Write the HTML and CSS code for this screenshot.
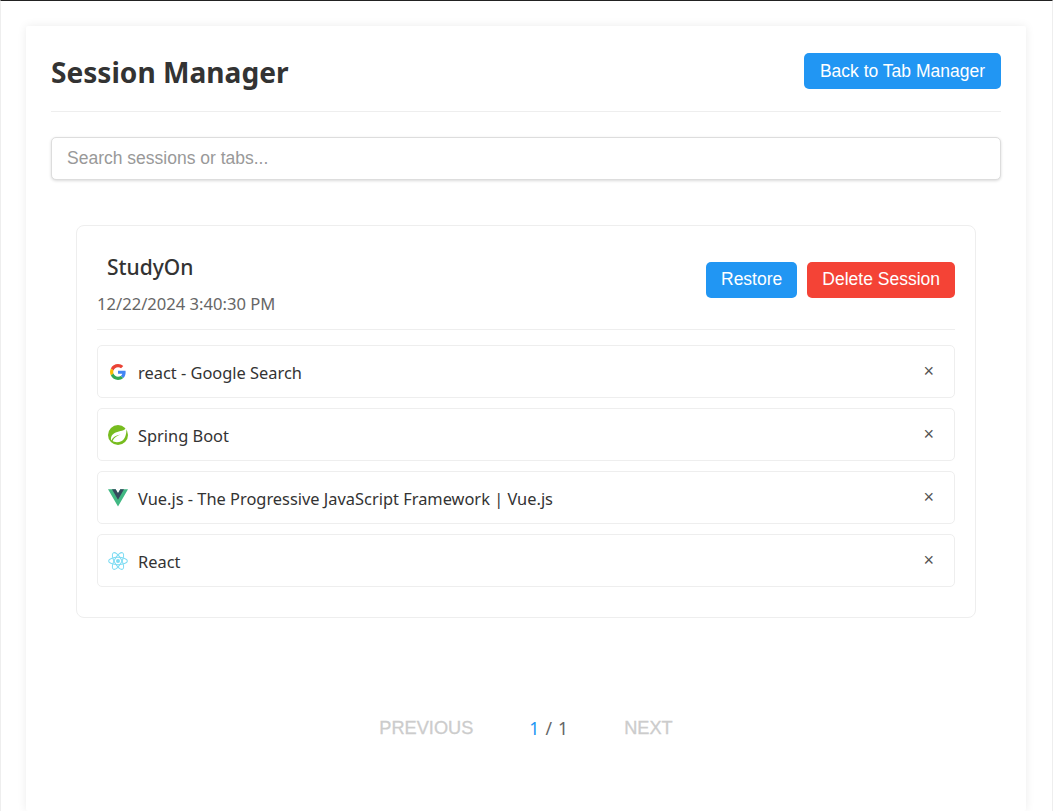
FILE: index.html
```html
<!DOCTYPE html>
<html lang="en">
<head>
  <meta charset="UTF-8" />
  <meta name="viewport" content="width=device-width, initial-scale=1.0"/>
  <title>Session Manager</title>
  <link rel="stylesheet" href="styles.css">
</head>
<body>
  <div class="container">
    <div class="header">
      <h1>Session Manager</h1>
      <button class="btn btn-blue">Back to Tab Manager</button>
    </div>

    <input class="search" type="text" placeholder="Search sessions or tabs...">

    <div class="session">
      <div class="session-head">
        <div>
          <h3>StudyOn</h3>
          <div class="date">12/22/2024 3:40:30 PM</div>
        </div>
        <div class="actions">
          <button class="btn btn-blue">Restore</button>
          <button class="btn btn-red">Delete Session</button>
        </div>
      </div>

      <ul class="tabs">
        <li class="tab">
          <svg class="favicon favicon-small" viewBox="0 0 48 48">
            <path fill="#ea4335" d="M24 9.500c3.500 0 6.700 1.300 9.100 3.500l6.800-6.800C35.800 2.400 30.300 0 24 0 14.600 0 6.500 5.400 2.600 13.200l7.900 6.200C12.400 13.600 17.700 9.500 24 9.500z"/>
            <path fill="#4285f4" d="M46.900 24.500c0-1.600-.1-3.100-.4-4.500H24v9h12.900c-.6 3-2.200 5.500-4.700 7.200l7.700 6c4.500-4.200 7-10.300 7-17.700z"/>
            <path fill="#fbbc05" d="M10.500 28.600c-.5-1.400-.8-3-.8-4.600s.3-3.200.8-4.600l-7.900-6.200C.9 16.500 0 20.100 0 24s.9 7.500 2.600 10.800l7.900-6.200z"/>
            <path fill="#34a853" d="M24 48c6.500 0 11.900-2.100 15.900-5.800l-7.700-6c-2.200 1.400-4.900 2.300-8.200 2.300-6.300 0-11.600-4.200-13.500-9.900l-7.900 6.200C6.500 42.600 14.600 48 24 48z"/>
          </svg>
          <span class="tab-title">react - Google Search</span>
          <span class="close">×</span>
        </li>
        <li class="tab">
          <svg class="favicon" viewBox="0 0 20 20">
            <circle cx="10" cy="10" r="10" fill="#77bc1f"/>
            <path fill="#fff" d="M18.300 2.200c-.6 1.700-2.300 3-4.300 3.500C10 6.700 4.800 7.400 3.300 11.800c-.5 1.500-.4 2.700 0 3.700 1.500-3 4.700-5.200 9.500-5.900-3.800 1.200-7 3.300-8.200 6.500 2 1.400 5.800 1.500 8.600.2 4-1.900 5.700-7.600 5.100-14.100z"/>
          </svg>
          <span class="tab-title">Spring Boot</span>
          <span class="close">×</span>
        </li>
        <li class="tab">
          <svg class="favicon" viewBox="0 0 256 221">
            <path fill="#41b883" d="M204.800 0H256L128 220.800 0 0h97.900L128 51.200 157.400 0z"/>
            <path fill="#35495e" d="M50.900 0L128 133 204.800 0h-47.400L128 51.200 97.900 0z"/>
          </svg>
          <span class="tab-title">Vue.js - The Progressive JavaScript Framework | Vue.js</span>
          <span class="close">×</span>
        </li>
        <li class="tab">
          <svg class="favicon" viewBox="-11.500 -11.500 23 23">
            <circle r="2.300" fill="#7fdcf3"/>
            <g fill="none" stroke="#7fdcf3" stroke-width="1.200">
              <ellipse rx="10.800" ry="4.200"/>
              <ellipse rx="10.800" ry="4.200" transform="rotate(60)"/>
              <ellipse rx="10.800" ry="4.200" transform="rotate(120)"/>
            </g>
          </svg>
          <span class="tab-title">React</span>
          <span class="close">×</span>
        </li>
      </ul>
    </div>

    <div class="pager">
      <span class="page-btn">PREVIOUS</span>
      <span class="page-info"><span class="page-current">1</span> / 1</span>
      <span class="page-btn">NEXT</span>
    </div>
  </div>
</body>
</html>
```

FILE: styles.css
```css
html, body {
  height: 100%;
}

body {
  margin: 0;
  padding: 25px 26px 0 25px;
  box-sizing: border-box;
  background: #fff;
  border-top: 1px solid #222;
  border-left: 1px solid #eee;
  border-right: 1px solid #eee;
  font-family: "Noto Sans", "Open Sans", sans-serif;
  color: #333;
  overflow: hidden;
}

.container {
  background: #fff;
  padding: 25px 25px 60px;
  height: 785px;
  box-sizing: border-box;
  border-radius: 2px;
  box-shadow: 0 0 10px rgba(0, 0, 0, 0.08);
}

.header {
  display: flex;
  justify-content: space-between;
  align-items: flex-start;
  height: 58px;
  padding-top: 2px;
  border-bottom: 1px solid #eee;
}

h1 {
  margin: 1px 0 0;
  font-size: 28.1px;
  line-height: 36px;
  font-weight: 700;
  color: #333;
}

.btn {
  border: none;
  border-radius: 5px;
  height: 36px;
  padding: 0 16px;
  font-family: "Liberation Sans", Arial, sans-serif;
  font-size: 17.5px;
  color: #fff;
  cursor: pointer;
}

.btn-blue {
  background: #2196f3;
}

.btn-red {
  background: #f44336;
}

.search {
  display: block;
  width: 100%;
  height: 43px;
  margin-top: 25px;
  padding: 0 15px;
  box-sizing: border-box;
  border: 1px solid #ddd;
  border-radius: 5px;
  box-shadow: 0 1px 3px rgba(0, 0, 0, 0.15);
  font-family: "Liberation Sans", Arial, sans-serif;
  font-size: 17.5px;
  outline: none;
}

.search::placeholder {
  color: #999;
}

.session {
  margin: 45px 25px 0;
  padding: 20px 20px 30px;
  border: 1px solid #eee;
  border-radius: 8px;
}

.session-head {
  display: flex;
  justify-content: space-between;
  align-items: center;
  padding-bottom: 14px;
  border-bottom: 1px solid #eee;
}

h3 {
  margin: 8px 0 12px 10px;
  font-size: 21px;
  line-height: 27px;
  font-weight: 500;
  color: #333;
}

.date {
  font-size: 16.6px;
  line-height: 22px;
  color: #666;
}

.actions {
  display: flex;
  gap: 10px;
  margin-bottom: 2px;
}

.actions .btn {
  padding: 0 15px;
}

.tabs {
  list-style: none;
  margin: 15px 0 0;
  padding: 0;
  display: flex;
  flex-direction: column;
  gap: 10px;
}

.tab {
  display: flex;
  align-items: center;
  height: 53px;
  box-sizing: border-box;
  padding: 0 20px 0 10px;
  border: 1px solid #eee;
  border-radius: 5px;
}

.favicon {
  width: 20px;
  height: 20px;
  margin-right: 10px;
  flex: none;
}

.favicon-small {
  width: 16px;
  height: 16px;
  margin: 0 12px 0 2px;
}

.tab-title {
  flex: 1;
  padding-top: 2px;
  font-size: 16.4px;
  color: #333;
}

.close {
  font-family: "Liberation Sans", Arial, sans-serif;
  font-size: 18px;
  color: #555;
}

.pager {
  display: flex;
  justify-content: center;
  align-items: center;
  gap: 56px;
  margin-top: 98px;
  font-family: "Liberation Sans", Arial, sans-serif;
}

.page-btn {
  font-size: 18.2px;
  color: #ccc;
  -webkit-text-stroke: 0.3px #ccc;
}

.page-info {
  font-family: "Noto Sans", sans-serif;
  font-size: 17.6px;
  word-spacing: 1.500px;
  color: #666;
}

.page-current {
  color: #2196f3;
}
```
